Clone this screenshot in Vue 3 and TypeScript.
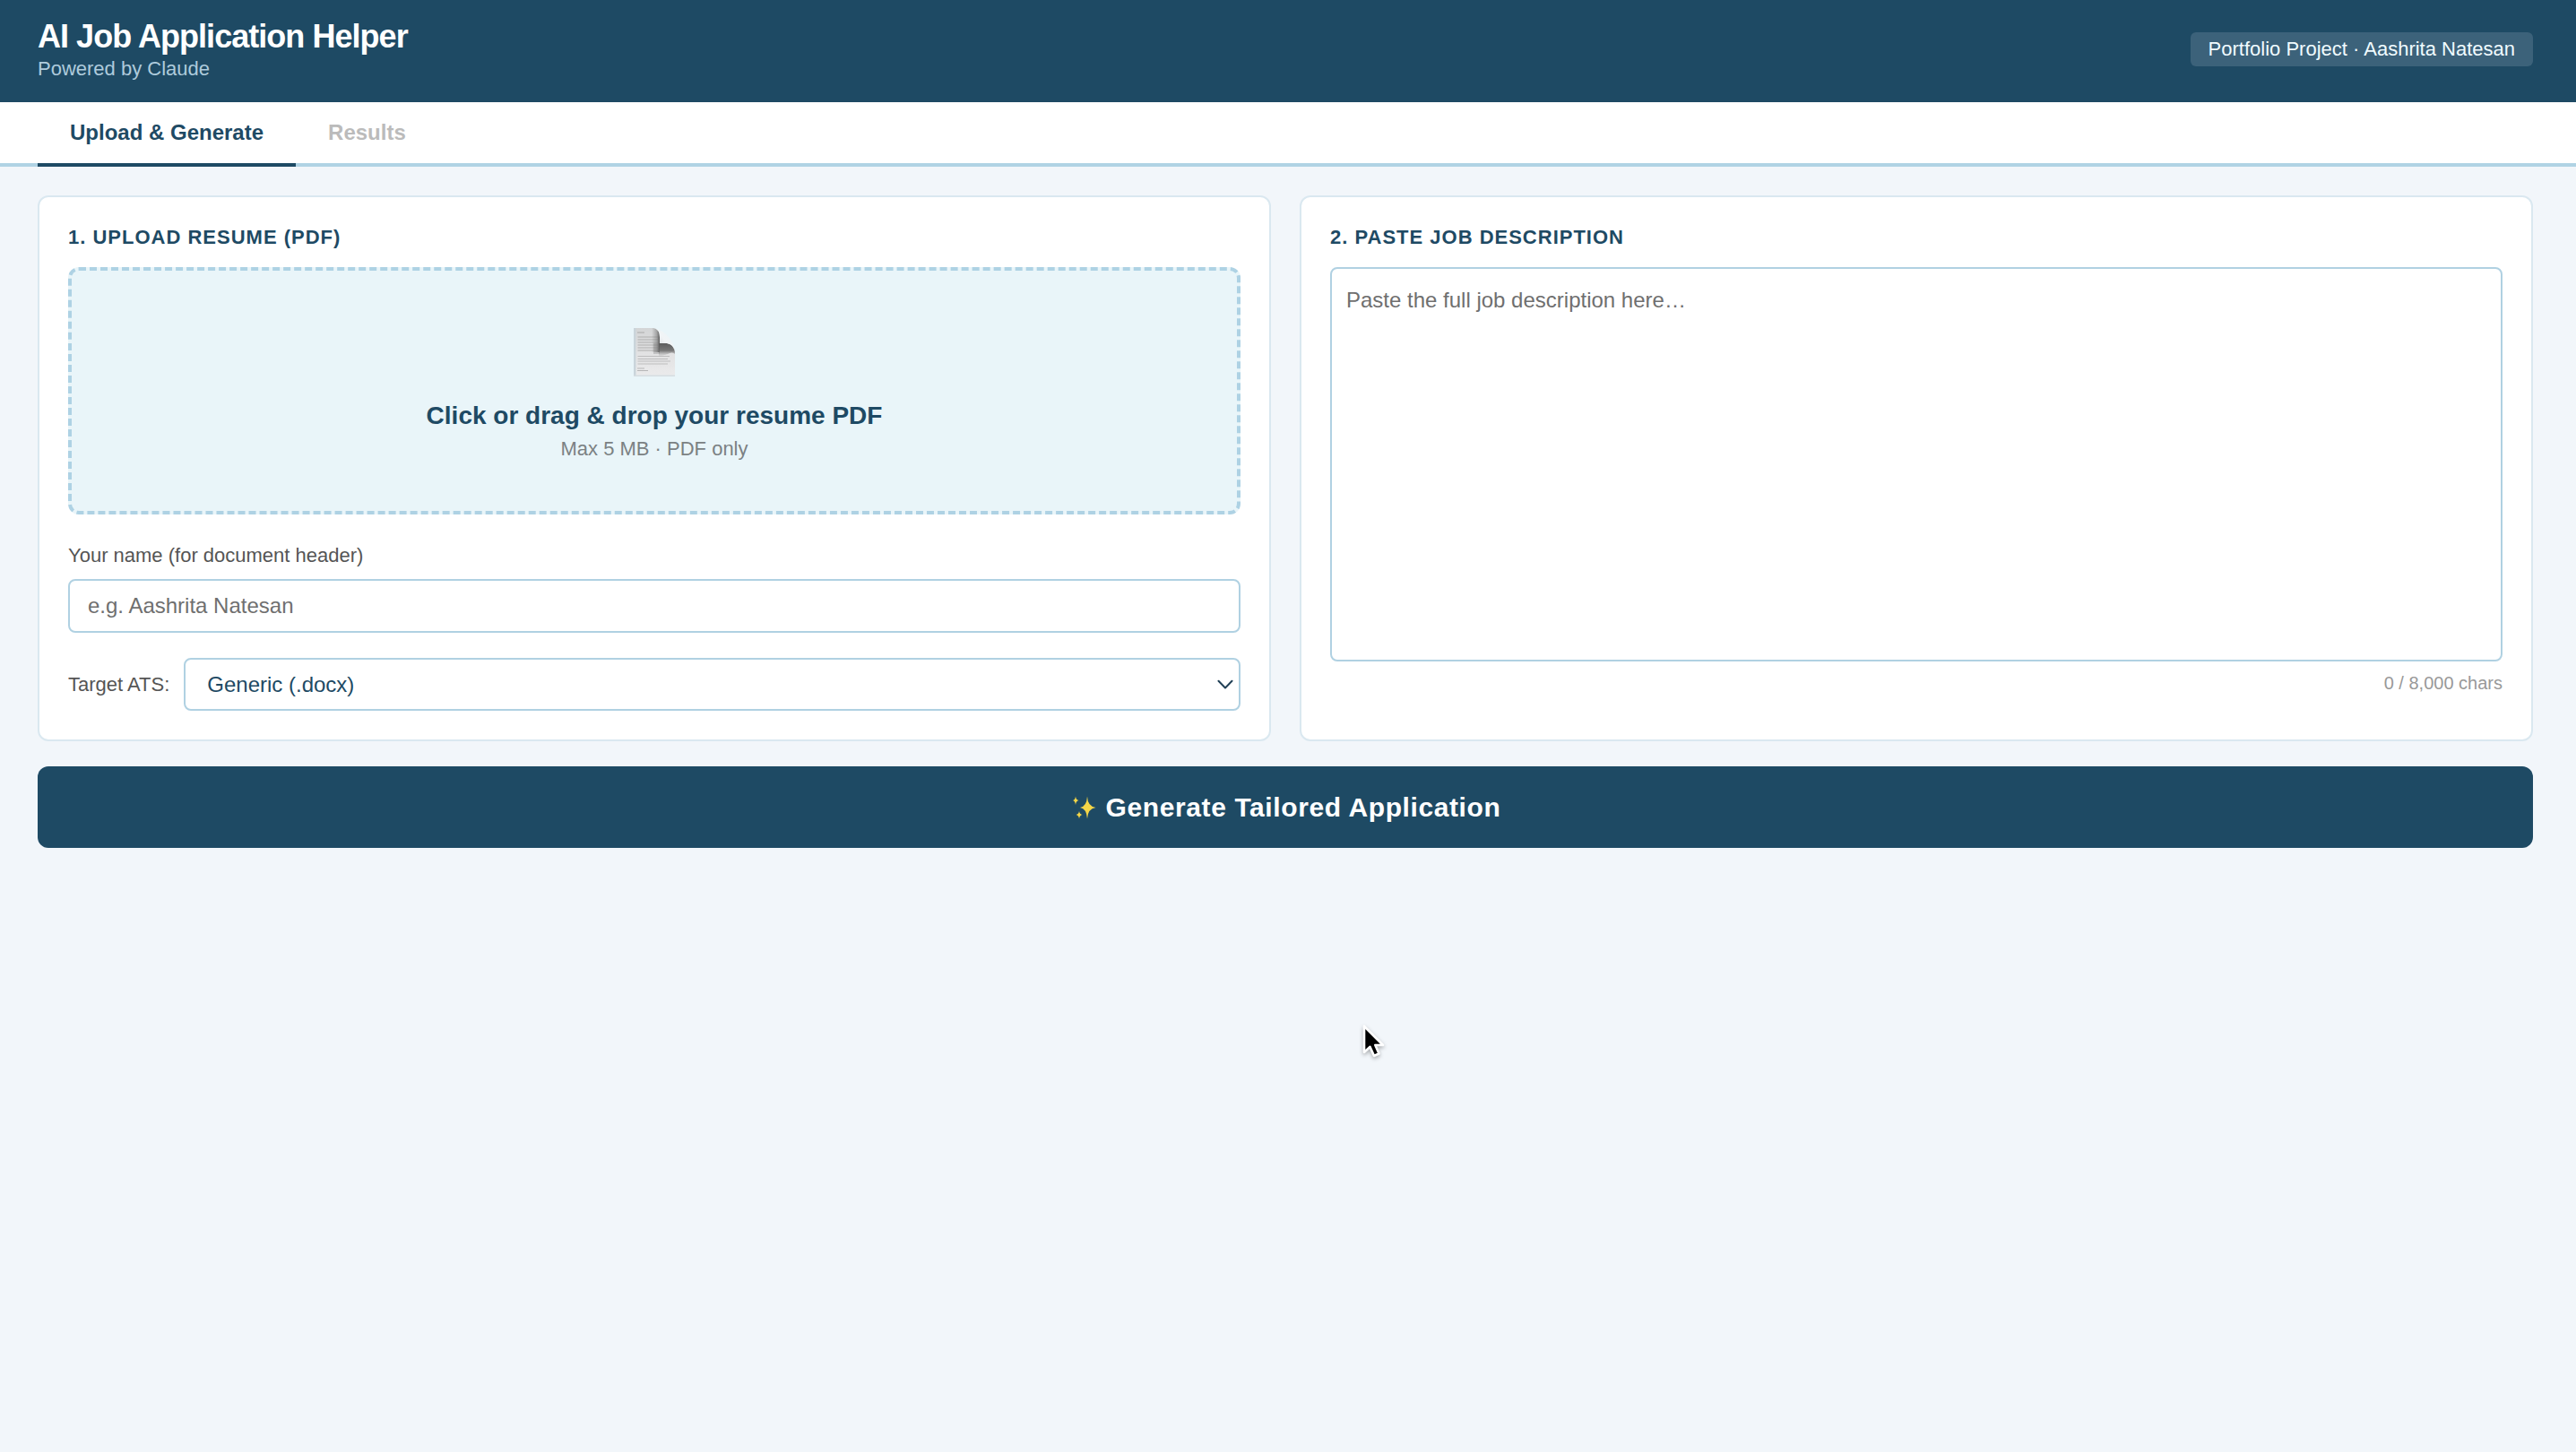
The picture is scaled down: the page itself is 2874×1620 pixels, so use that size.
<script setup lang="ts">
import { computed, ref } from 'vue'

const maxChars = 8000
const activeTab = ref<'upload' | 'results'>('upload')
const candidateName = ref('')
const jobDescription = ref('')
const atsTarget = ref('Generic (.docx)')

const charCount = computed(
  () => `${jobDescription.value.length} / ${maxChars.toLocaleString('en-US')} chars`,
)
const textLines = [21, 24, 27, 30, 33, 36]
</script>

<template>
  <div class="page">
    <header class="header">
      <div>
        <h1 class="title">AI Job Application Helper</h1>
        <p class="subtitle">Powered by Claude</p>
      </div>
      <span class="badge">Portfolio Project · Aashrita Natesan</span>
    </header>

    <nav class="tabs">
      <button class="tab" :class="{ active: activeTab === 'upload' }">Upload &amp; Generate</button>
      <button class="tab" :class="{ active: activeTab === 'results' }" disabled>Results</button>
    </nav>

    <main class="main">
      <div class="cards">
        <section class="card">
          <h2 class="card-title">1. UPLOAD RESUME (PDF)</h2>
          <div class="dropzone">
            <svg class="doc" viewBox="0 0 46 54" width="46" height="54">
              <defs>
                <linearGradient id="paper" x1="0" y1="0" x2="0" y2="1">
                  <stop offset="0" stop-color="#d3d5d6" />
                  <stop offset="0.55" stop-color="#e2e2e3" />
                  <stop offset="1" stop-color="#ebebec" />
                </linearGradient>
                <linearGradient id="foldX" x1="0" y1="0" x2="1" y2="0">
                  <stop offset="0" stop-color="#777" stop-opacity="0" />
                  <stop offset="0.65" stop-color="#777" stop-opacity="0.55" />
                  <stop offset="1" stop-color="#555" />
                </linearGradient>
                <linearGradient id="foldY" x1="0" y1="0" x2="0" y2="1">
                  <stop offset="0" stop-color="#5c5c5c" />
                  <stop offset="0.55" stop-color="#6c6c6c" stop-opacity="0.9" />
                  <stop offset="1" stop-color="#aaa" stop-opacity="0" />
                </linearGradient>
                <linearGradient id="curl" x1="0" y1="1" x2="1" y2="0">
                  <stop offset="0" stop-color="#c9cdd0" />
                  <stop offset="0.5" stop-color="#f1f4f6" />
                  <stop offset="1" stop-color="#e8f4f8" />
                </linearGradient>
              </defs>
              <path d="M0 0H22Q29 1 29 10V17H37Q45 18 46 27V54H0Z" fill="url(#paper)" />
              <path d="M0 0H2.5V54H0Z" fill="#cad5db" />
              <path d="M0 52.5H46V54H0Z" fill="#d5dde1" />
              <path d="M4 5H12" stroke="#aaa" stroke-width="1" />
              <path
                v-for="y in textLines"
                :key="y"
                :d="`M4.5 ${y - 11}H27`"
                stroke="#b2b2b3"
                stroke-width="1.1"
              />
              <path d="M4.5 31.5H40M4.5 34.5H38M4.5 37H41M4.5 40H38" stroke="#bdbdbe" stroke-width="1.1" />
              <path d="M4 45H12M4 47.5H16" stroke="#b6b6b7" stroke-width="1" />
              <path d="M22 17H29V29H22Z" fill="#8a8a8a" opacity="0.35" />
              <path d="M20 0H22Q29 1 29 10V27H20Z" fill="url(#foldX)" />
              <path d="M28 17H37Q45 18 46 27V29Q43 26 38 29L28 32Z" fill="url(#foldY)" />
              <path d="M23 0Q33 3 37 8Q44 14 46 26Q44 18 37 17H29V10Q29 2 23 0Z" fill="url(#curl)" />
            </svg>
            <p class="drop-title">Click or drag &amp; drop your resume PDF</p>
            <p class="drop-hint">Max 5 MB · PDF only</p>
          </div>

          <label class="label" for="name">Your name (for document header)</label>
          <input id="name" v-model="candidateName" class="input" placeholder="e.g. Aashrita Natesan" />

          <div class="ats">
            <span class="ats-label">Target ATS:</span>
            <div class="select">
              <span>{{ atsTarget }}</span>
              <svg viewBox="0 0 18 12" width="18" height="12">
                <path d="M1.5 1.8L9 9.5L16.5 1.8" fill="none" stroke="#203f55" stroke-width="2" stroke-linecap="round" stroke-linejoin="round" />
              </svg>
            </div>
          </div>
        </section>

        <section class="card">
          <h2 class="card-title">2. PASTE JOB DESCRIPTION</h2>
          <textarea v-model="jobDescription" class="textarea" placeholder="Paste the full job description here…"></textarea>
          <p class="count">{{ charCount }}</p>
        </section>
      </div>

      <button class="generate">
        <svg class="sparkles" viewBox="0 0 26 26" width="26" height="26">
          <g fill="#f3d548">
            <path d="M16 0.5Q16.600 11.800 25.500 13Q16.600 14.200 16 25.500Q15.400 14.200 8 13Q15.400 11.800 16 0.500Z" />
            <path d="M3 0.500Q3.500 4.500 6.500 5Q3.500 5.500 3 10Q2.500 5.500 0 5Q2.500 4.500 3 0.500Z" />
            <path d="M7 17Q7.500 20.500 10.500 21Q7.500 21.500 7 25.500Q6.500 21.500 3.500 21Q6.500 20.500 7 17Z" />
            <circle cx="16" cy="13" r="2.500" />
            <circle cx="3" cy="5" r="1.300" />
            <circle cx="7" cy="21" r="1.300" />
          </g>
        </svg>
        <span>Generate Tailored Application</span>
      </button>
    </main>

    <svg class="cursor" viewBox="0 0 30 42" width="30" height="42">
      <path d="M4 3V32L10.500 26L15 36L20.500 33.500L16.300 24H25Z" fill="#000" stroke="#fff" stroke-width="2.600" stroke-linejoin="round" />
    </svg>
  </div>
</template>

<style>
body {
  margin: 0;
  background: #f2f6fa;
}
</style>

<style scoped>
.page {
  position: relative;
  box-sizing: border-box;
  min-height: 1620px;
  background: #f2f6fa;
  font-family: 'Liberation Sans', Arial, sans-serif;
  color: #1e4a64;
}
.page *,
.page *::before {
  box-sizing: border-box;
}
h1,
h2,
p {
  margin: 0;
}
button,
input,
textarea {
  font-family: inherit;
}
.header {
  display: flex;
  justify-content: space-between;
  align-items: center;
  height: 114px;
  padding: 20px 48px 24px 42px;
  background: #1e4a64;
}
.title {
  padding-top: 1px;
  font-size: 36px;
  line-height: 40px;
  font-weight: 700;
  letter-spacing: -0.96px;
  color: #fff;
}
.subtitle {
  margin-top: 3px;
  font-size: 22px;
  line-height: 26px;
  color: #aecbdc;
}
.badge {
  padding: 6px 20px;
  border-radius: 6px;
  background: #3c627a;
  color: #f0fbff;
  font-size: 22px;
  line-height: 26px;
}
.tabs {
  display: flex;
  height: 72px;
  padding-left: 42px;
  background: linear-gradient(#b0d3e4, #b0d3e4) bottom / 100% 4px no-repeat #fff;
}
.tab {
  height: 72px;
  padding: 20px 36px;
  border: 0;
  border-bottom: 4px solid transparent;
  background: none;
  font-size: 24px;
  line-height: 28px;
  font-weight: 700;
  color: #bbb;
}
.tab.active {
  color: #1e4a64;
  border-bottom-color: #1e4a64;
}
.main {
  padding: 32px 48px 32px 42px;
}
.cards {
  display: grid;
  grid-template-columns: 1fr 1fr;
  gap: 32px;
}
.card {
  padding: 32px;
  border: 2px solid #dae8f0;
  border-radius: 12px;
  background: #fff;
}
.card-title {
  margin-bottom: 20px;
  font-size: 22px;
  line-height: 26px;
  font-weight: 700;
  letter-spacing: 1px;
}
.dropzone {
  display: flex;
  flex-direction: column;
  align-items: center;
  height: 276px;
  padding-top: 64px;
  border: 4px dashed #aed2e4;
  border-radius: 12px;
  background: #e9f5f9;
}
.doc {
  display: block;
}
.drop-title {
  margin-top: 28px;
  font-size: 28px;
  line-height: 32px;
  font-weight: 700;
}
.drop-hint {
  margin-top: 8px;
  font-size: 22px;
  line-height: 26px;
  color: #7b8183;
}
.label {
  display: block;
  margin: 33px 0 13px;
  font-size: 22px;
  line-height: 26px;
  color: #555;
}
.input {
  display: block;
  width: 100%;
  height: 60px;
  padding: 0 20px;
  border: 2px solid #b0d1e2;
  border-radius: 8px;
  background: #fff;
  font-size: 24px;
  outline: none;
}
.input::placeholder,
.textarea::placeholder {
  color: #6f6f6f;
  opacity: 1;
}
.ats {
  display: flex;
  align-items: center;
  gap: 16px;
  margin-top: 28px;
}
.ats-label {
  font-size: 22px;
  line-height: 26px;
  color: #555;
}
.select {
  flex: 1;
  display: flex;
  align-items: center;
  justify-content: space-between;
  height: 59px;
  padding: 0 6px 0 24px;
  border: 2px solid #b0d1e2;
  border-radius: 8px;
  background: #fff;
  font-size: 24px;
  line-height: 28px;
}
.textarea {
  display: block;
  width: 100%;
  height: 440px;
  padding: 17px 16px 16px;
  border: 2px solid #b0d1e2;
  border-radius: 8px;
  background: #fff;
  font-size: 24px;
  line-height: 36px;
  resize: none;
  outline: none;
}
.count {
  margin-top: 12px;
  text-align: right;
  font-size: 20px;
  line-height: 24px;
  color: #999;
}
.generate {
  display: flex;
  align-items: center;
  justify-content: center;
  gap: 11px;
  width: 100%;
  height: 91px;
  margin-top: 28px;
  padding: 0 0 0 3px;
  border: 0;
  border-radius: 12px;
  background: #1e4a64;
  color: #fff;
  font-size: 30px;
  line-height: 34px;
  font-weight: 700;
  letter-spacing: 0.6px;
}
.cursor {
  position: absolute;
  left: 1518px;
  top: 1142px;
  filter: drop-shadow(0 2px 2px rgba(0, 0, 0, 0.3));
}
</style>
